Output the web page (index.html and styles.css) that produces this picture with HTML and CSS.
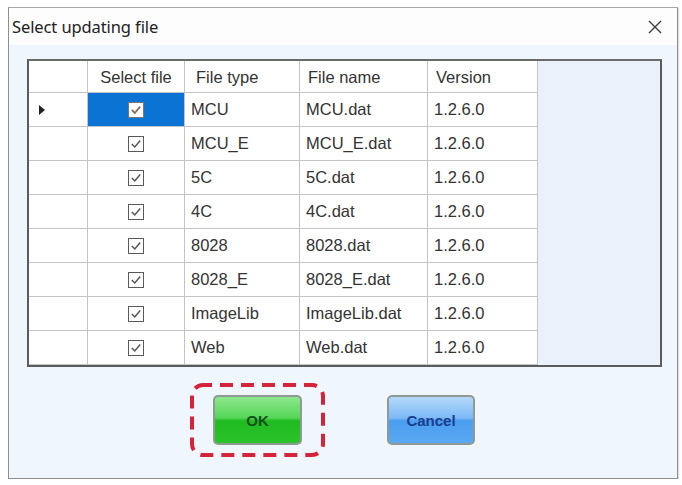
FILE: index.html
```html
<!DOCTYPE html>
<html>
<head>
<meta charset="utf-8">
<link rel="stylesheet" href="styles.css">
</head>
<body>
<div class="window">
  <div class="titlebar">
    <span class="title">Select updating file</span>
    <svg class="close" width="16" height="16" viewBox="0 0 16 16"><path d="M2 2 L14 14 M14 2 L2 14" stroke="#3a3a3a" stroke-width="1.4" fill="none"/></svg>
  </div>
  <div class="content">
    <div class="gridbox">
      <div class="grid">
        <div class="cell hdr rowhdr"></div>
        <div class="cell hdr center">Select file</div>
        <div class="cell hdr pad-type">File type</div>
        <div class="cell hdr">File name</div>
        <div class="cell hdr">Version</div>

        <div class="cell rowhdr"><svg width="7" height="10" viewBox="0 0 7 10"><path d="M0 0 L6 5 L0 10 Z" fill="#222"/></svg></div>
        <div class="cell center selected"><span class="chk"><svg width="14" height="14" viewBox="0 0 14 14"><path d="M2.8 7 L5.8 10 L11.2 3.6" stroke="#8a6a5a" stroke-width="1.8" fill="none"/></svg></span></div>
        <div class="cell">MCU</div>
        <div class="cell">MCU.dat</div>
        <div class="cell">1.2.6.0</div>

        <div class="cell rowhdr"></div>
        <div class="cell center"><span class="chk"><svg width="14" height="14" viewBox="0 0 14 14"><path d="M2.8 7 L5.8 10 L11.2 3.6" stroke="#555" stroke-width="1.5" fill="none"/></svg></span></div>
        <div class="cell">MCU_E</div>
        <div class="cell">MCU_E.dat</div>
        <div class="cell">1.2.6.0</div>

        <div class="cell rowhdr"></div>
        <div class="cell center"><span class="chk"><svg width="14" height="14" viewBox="0 0 14 14"><path d="M2.8 7 L5.8 10 L11.2 3.6" stroke="#555" stroke-width="1.5" fill="none"/></svg></span></div>
        <div class="cell">5C</div>
        <div class="cell">5C.dat</div>
        <div class="cell">1.2.6.0</div>

        <div class="cell rowhdr"></div>
        <div class="cell center"><span class="chk"><svg width="14" height="14" viewBox="0 0 14 14"><path d="M2.8 7 L5.8 10 L11.2 3.6" stroke="#555" stroke-width="1.5" fill="none"/></svg></span></div>
        <div class="cell">4C</div>
        <div class="cell">4C.dat</div>
        <div class="cell">1.2.6.0</div>

        <div class="cell rowhdr"></div>
        <div class="cell center"><span class="chk"><svg width="14" height="14" viewBox="0 0 14 14"><path d="M2.8 7 L5.8 10 L11.2 3.6" stroke="#555" stroke-width="1.5" fill="none"/></svg></span></div>
        <div class="cell">8028</div>
        <div class="cell">8028.dat</div>
        <div class="cell">1.2.6.0</div>

        <div class="cell rowhdr"></div>
        <div class="cell center"><span class="chk"><svg width="14" height="14" viewBox="0 0 14 14"><path d="M2.8 7 L5.8 10 L11.2 3.6" stroke="#555" stroke-width="1.5" fill="none"/></svg></span></div>
        <div class="cell">8028_E</div>
        <div class="cell">8028_E.dat</div>
        <div class="cell">1.2.6.0</div>

        <div class="cell rowhdr"></div>
        <div class="cell center"><span class="chk"><svg width="14" height="14" viewBox="0 0 14 14"><path d="M2.8 7 L5.8 10 L11.2 3.6" stroke="#555" stroke-width="1.5" fill="none"/></svg></span></div>
        <div class="cell">ImageLib</div>
        <div class="cell">ImageLib.dat</div>
        <div class="cell">1.2.6.0</div>

        <div class="cell rowhdr"></div>
        <div class="cell center"><span class="chk"><svg width="14" height="14" viewBox="0 0 14 14"><path d="M2.8 7 L5.8 10 L11.2 3.6" stroke="#555" stroke-width="1.5" fill="none"/></svg></span></div>
        <div class="cell">Web</div>
        <div class="cell">Web.dat</div>
        <div class="cell">1.2.6.0</div>
      </div>
    </div>
    <div class="buttons">
      <div class="highlight">
        <svg class="dash" width="135" height="74" viewBox="0 0 135 74"><rect x="2" y="2" width="131" height="70" rx="11" ry="11" fill="none" stroke="#d3243a" stroke-width="4" stroke-dasharray="13 8" stroke-dashoffset="4"/></svg>
        <button class="btn ok">OK</button>
      </div>
      <button class="btn cancel">Cancel</button>
    </div>
  </div>
</div>
</body>
</html>
```

FILE: styles.css
```css
html, body {
  margin: 0;
  padding: 0;
  background: #ffffff;
}
body {
  padding: 7px 0 0 8px;
  font-family: "Liberation Sans", Arial, sans-serif;
}
.window {
  width: 670px;
  height: 472px;
  box-sizing: border-box;
  border: 1px solid #8e8e8e;
  border-top-color: #a8a8a8;
  background: #eff6fd;
  display: flex;
  flex-direction: column;
  box-shadow: 1px 1px 1px rgba(0,0,0,0.12);
}
.titlebar {
  height: 37px;
  flex: none;
  background: #fdfdfd;
  display: flex;
  align-items: center;
  justify-content: space-between;
  padding: 0 14px 0 3px;
}
.title {
  font-family: "Noto Sans", "Open Sans", sans-serif;
  font-size: 16.5px;
  color: #222;
  letter-spacing: -0.1px;
}
.close {
  display: block;
}
.content {
  flex: 1;
  padding: 14px 0 0 18px;
  display: flex;
  flex-direction: column;
}
.gridbox {
  width: 635px;
  height: 308px;
  box-sizing: border-box;
  border: 2px solid #5c5c5c;
  border-top-color: #6a6a6a;
  background: #e9f1fa;
}
.grid {
  display: grid;
  grid-template-columns: 59px 97px 115px 128px 110px;
  grid-template-rows: 32px repeat(8, 34px);
  width: 509px;
}
.cell {
  box-sizing: border-box;
  border-right: 1px solid #c4c4c4;
  border-bottom: 1px solid #c4c4c4;
  background: #ffffff;
  font-size: 16.5px;
  color: #333333;
  display: flex;
  align-items: center;
  padding-left: 6px;
  white-space: nowrap;
}
.hdr {
  padding-left: 8px;
  padding-top: 1px;
}
.pad-type {
  padding-left: 11px;
}
.center {
  justify-content: center;
  padding-left: 0;
}
.rowhdr {
  padding-left: 10px;
}
.selected {
  background: #0b73d4;
}
.chk {
  width: 16px;
  height: 16px;
  box-sizing: border-box;
  border: 1.5px solid #5a5a5a;
  background: #fff;
  display: flex;
  align-items: center;
  justify-content: center;
}
.chk svg {
  display: block;
}
.selected .chk {
  border-color: #777;
}
.buttons {
  display: flex;
  align-items: center;
  margin-top: 16px;
  padding-left: 163px;
  gap: 62px;
}
.highlight {
  position: relative;
  width: 135px;
  height: 74px;
  display: flex;
  align-items: center;
  justify-content: center;
}
.dash {
  position: absolute;
  left: 0;
  top: 0;
  display: block;
}
.btn {
  width: 89px;
  height: 50px;
  box-sizing: border-box;
  border: 2px solid #8f9a94;
  border-radius: 5px;
  font-family: "Liberation Sans", Arial, sans-serif;
  font-size: 15px;
  padding: 0;
}
.ok {
  background: linear-gradient(to bottom, #8de88d 0%, #57d657 45%, #1fbb1f 52%, #2cc42c 100%);
  color: #14501c;
  font-weight: bold;
}
.cancel {
  width: 88px;
  background: linear-gradient(to bottom, #b4d8fb 0%, #7dbaf6 45%, #4a9ef0 52%, #5aa9f3 100%);
  color: #1b3c8c;
  font-weight: bold;
}
```
